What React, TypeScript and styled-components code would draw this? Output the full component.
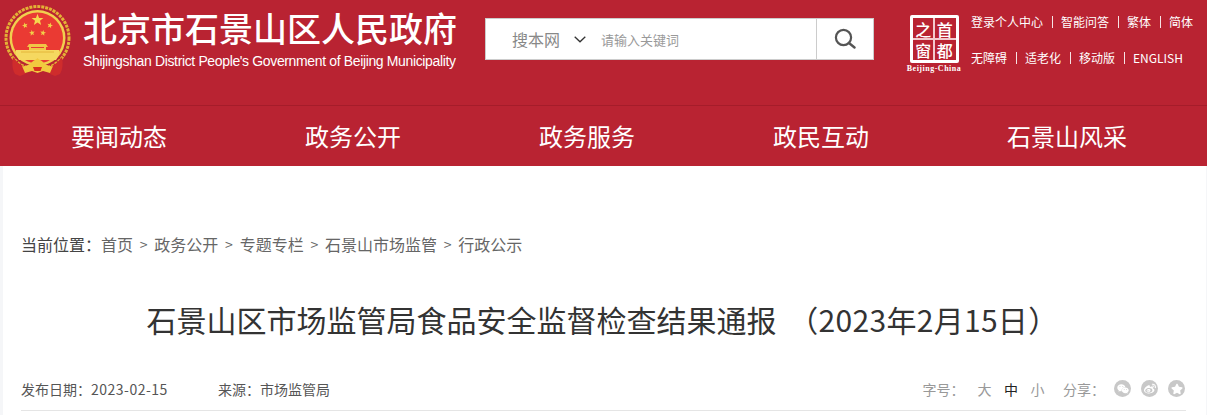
import { Fragment } from "react";
import styled, { createGlobalStyle } from "styled-components";
import { FaStar, FaWeibo, FaWeixin } from "react-icons/fa";

const navItems = ["要闻动态", "政务公开", "政务服务", "政民互动", "石景山风采"];
const crumbs = ["首页", "政务公开", "专题专栏", "石景山市场监管", "行政公示"];
const linkRows = [
  ["登录个人中心", "智能问答", "繁体", "简体"],
  ["无障碍", "适老化", "移动版", "ENGLISH"],
];

// five pointed star for the emblem
const starPoints = (cx: number, cy: number, r: number, tilt = 0) =>
  Array.from({ length: 10 }, (_, i) => {
    const radius = i % 2 === 0 ? r : r * 0.42;
    const angle = ((-90 + tilt + i * 36) * Math.PI) / 180;
    return `${(cx + radius * Math.cos(angle)).toFixed(2)},${(cy + radius * Math.sin(angle)).toFixed(2)}`;
  }).join(" ");

const Emblem = () => (
  <svg width="68" height="72" viewBox="0 0 68 72">
    <circle cx="33.5" cy="33" r="31.5" fill="none" stroke="#e4b236" strokeWidth="3" strokeDasharray="3 1" />
    <circle cx="33.5" cy="33" r="28" fill="#f1cf4e" />
    <circle cx="33.5" cy="33" r="25.5" fill="#ea3a33" />
    <polygon points={starPoints(33.5, 15, 6.2)} fill="#f5d84f" />
    <polygon points={starPoints(21, 20.5, 3, -15)} fill="#f2cf48" />
    <polygon points={starPoints(46, 20.5, 3, 15)} fill="#f2cf48" />
    <polygon points={starPoints(28, 28, 3, -10)} fill="#f2cf48" />
    <polygon points={starPoints(39, 28, 3, 10)} fill="#f2cf48" />
    <path d="M25 39h17l2 3h-2v3H25v-3h-2z" fill="#f0c646" />
    <path d="M27 42h13v1H27z" fill="#ea3a33" />
    <path d="M12 45h43v5l-3 5H15l-3-5z" fill="#f5d860" />
    <path d="M17 47h33" stroke="#e0ae30" strokeWidth="0.8" />
    <path d="M9 52c3 4 6 7 10 9l6 3-4 5-5 2-5-2c-3-5-3-11-2-17z" fill="#cf2c2c" />
    <path d="M58 52c-3 4-6 7-10 9l-6 3 4 5 5 2 5-2c3-5 3-11 2-17z" fill="#cf2c2c" />
    <path d="M18 61c4 1 8-2 10-4 2-2 4-2 5.500-4 1.500 2 3.500 2 5.500 4 2 2 6 5 10 4l-3 7-7-2-5.500 2-5.500-2-7 2z" fill="#f1c93f" />
    <path d="M29 62h9l-1.500 4h-6z" fill="#d8301f" />
  </svg>
);

const App = () => (
  <Page>
    <GlobalStyle />
    <Header>
      <TopBar>
        <EmblemSlot>
          <Emblem />
        </EmblemSlot>
        <Brand>
          <BrandName>北京市石景山区人民政府</BrandName>
          <BrandEn>Shijingshan District People's Government of Beijing Municipality</BrandEn>
        </Brand>
        <Search>
          <Scope>
            搜本网
            <svg width="12" height="7" viewBox="0 0 12 7">
              <path d="M.7.7 6 5.800 11.300.7" fill="none" stroke="#333" strokeWidth="1.3" />
            </svg>
          </Scope>
          <Placeholder>请输入关键词</Placeholder>
          <SearchButton>
            <svg width="22" height="22" viewBox="0 0 22 22">
              <circle cx="9.500" cy="9.500" r="7.600" fill="none" stroke="#555" strokeWidth="2.2" />
              <path d="M15 15l5.500 4.500" stroke="#555" strokeWidth="2.4" strokeLinecap="round" />
            </svg>
          </SearchButton>
        </Search>
        <Capital>
          <CapitalBox>
            <CapitalChar>之</CapitalChar>
            <CapitalChar>首</CapitalChar>
            <CapitalChar>窗</CapitalChar>
            <CapitalChar>都</CapitalChar>
          </CapitalBox>
          <CapitalCaption>Beijing-China</CapitalCaption>
        </Capital>
        <Links>
          {linkRows.map((row) => (
            <LinkRow key={row[0]}>
              {row.map((text, i) => (
                <Fragment key={text}>
                  {i > 0 && <Bar />}
                  <span>{text}</span>
                </Fragment>
              ))}
            </LinkRow>
          ))}
        </Links>
      </TopBar>
      <Nav>
        {navItems.map((item) => (
          <NavItem key={item}>{item}</NavItem>
        ))}
      </Nav>
    </Header>
    <Main>
      <Breadcrumb>
        <CrumbLabel>当前位置&#xFF1A;</CrumbLabel>
        {crumbs.map((crumb, i) => (
          <Fragment key={crumb}>
            {i > 0 && <CrumbArrow>&gt;</CrumbArrow>}
            <span>{crumb}</span>
          </Fragment>
        ))}
      </Breadcrumb>
      <Title>
        石景山区市场监管局食品安全监督检查结果通报 <TitleDate>&#xFF08;2023年2月15日&#xFF09;</TitleDate>
      </Title>
      <Meta>
        <MetaDate>
          发布日期&#xFF1A;<Digits>2023-02-15</Digits>
        </MetaDate>
        <span>来源&#xFF1A;市场监管局</span>
        <Tools>
          <FontLabel>字号&#xFF1A;</FontLabel>
          <FontSize>大</FontSize>
          <FontSize $active>中</FontSize>
          <FontSize>小</FontSize>
          <ShareLabel>分享&#xFF1A;</ShareLabel>
          <ShareIcons>
            <ShareIcon>
              <FaWeixin />
            </ShareIcon>
            <ShareIcon>
              <FaWeibo />
            </ShareIcon>
            <ShareIcon>
              <FaStar />
            </ShareIcon>
          </ShareIcons>
        </Tools>
      </Meta>
    </Main>
  </Page>
);

export default App;

const FONT = `"Noto Sans CJK SC", "Liberation Sans", sans-serif`;

const GlobalStyle = createGlobalStyle`
  html, body {
    margin: 0;
    padding: 0;
    background: #f5f6f8;
    font-family: ${FONT};
  }
`;

const Page = styled.div`
  width: 1207px;
  height: 415px;
  overflow: hidden;
`;

const Header = styled.header`
  background: #b92332;
  color: #fff;
`;

const TopBar = styled.div`
  height: 105px;
  display: flex;
  align-items: flex-start;
  border-bottom: 1px solid #a51c2a;
`;

const EmblemSlot = styled.div`
  width: 83px;
  padding: 5px 0 0 4px;
  box-sizing: border-box;
  flex-shrink: 0;
`;

const Brand = styled.div`
  width: 402px;
  padding-top: 7px;
  flex-shrink: 0;
`;

const BrandName = styled.div`
  font-size: 34px;
  line-height: 42px;
  font-weight: 500;
  white-space: nowrap;
`;

const BrandEn = styled.div`
  font-family: "Liberation Sans", sans-serif;
  font-size: 14px;
  line-height: 18px;
  margin-top: 3px;
  letter-spacing: -0.36px;
  white-space: nowrap;
`;

const Search = styled.div`
  width: 389px;
  height: 42px;
  margin-top: 18px;
  box-sizing: border-box;
  display: flex;
  align-items: center;
  background: #fff;
  border: 1px solid #ccc;
  flex-shrink: 0;
`;

const Scope = styled.div`
  width: 115px;
  padding-left: 26px;
  box-sizing: border-box;
  display: flex;
  align-items: center;
  gap: 14px;
  color: #888;
  font-size: 16px;
  flex-shrink: 0;
`;

const Placeholder = styled.div`
  flex: 1;
  color: #999;
  font-size: 13px;
`;

const SearchButton = styled.div`
  width: 56px;
  height: 100%;
  display: flex;
  align-items: center;
  justify-content: center;
  border-left: 1px solid #ccc;
`;

const Capital = styled.div`
  width: 54px;
  margin: 15px 0 0 33px;
  display: flex;
  flex-direction: column;
  align-items: center;
  flex-shrink: 0;
`;

const CapitalBox = styled.div`
  width: 49px;
  height: 48px;
  box-sizing: border-box;
  display: grid;
  grid-template-columns: minmax(0, 1fr) minmax(0, 1fr);
  grid-template-rows: minmax(0, 1fr) minmax(0, 1fr);
  gap: 2px;
  padding: 1px;
  border: 3px solid #fff;
  border-radius: 2px;
  background: linear-gradient(#f3c9cd, #f3c9cd) center / 2px 100% no-repeat,
    linear-gradient(#f3c9cd, #f3c9cd) center / 100% 2px no-repeat;
`;

const CapitalChar = styled.span`
  display: flex;
  align-items: center;
  justify-content: center;
  font-size: 16px;
  font-weight: 500;
  line-height: 16px;
`;

const CapitalCaption = styled.div`
  font-family: "Liberation Serif", serif;
  font-size: 8px;
  font-weight: 700;
  line-height: 10px;
  margin-top: 1px;
  letter-spacing: 0.5px;
  white-space: nowrap;
`;

const Links = styled.div`
  margin: 13px 0 0 10px;
  display: flex;
  flex-direction: column;
  gap: 18px;
`;

const LinkRow = styled.div`
  display: flex;
  align-items: center;
  gap: 8.500px;
  font-size: 12px;
  line-height: 18px;
  white-space: nowrap;
`;

const Bar = styled.i`
  width: 1px;
  height: 12px;
  background: #f6e3e5;
`;

const Nav = styled.nav`
  height: 60px;
  padding-left: 71px;
  display: flex;
  align-items: center;
  gap: 138px;
`;

const NavItem = styled.a`
  font-size: 24px;
  line-height: 60px;
  white-space: nowrap;
`;

const Main = styled.main`
  margin: 0 1px 0 3px;
  height: 249px;
  padding: 0 20px 0 18px;
  background: #fff;
  overflow: hidden;
`;

const Breadcrumb = styled.div`
  margin-top: 66px;
  display: flex;
  align-items: center;
  color: #666;
  font-size: 16px;
  line-height: 24px;
  white-space: nowrap;
`;

const CrumbLabel = styled.span`
  width: 80px;
  color: #444;
`;

const CrumbArrow = styled.span`
  width: 21.300px;
  text-align: center;
  font-size: 14px;
`;

const Title = styled.h1`
  margin: 41px 0 0;
  padding-right: 2px;
  color: #333;
  font-size: 30px;
  font-weight: 400;
  line-height: 44px;
  text-align: center;
  white-space: nowrap;
`;

const TitleDate = styled.span`
  margin-left: 5px;
  letter-spacing: 0.3px;
`;

const Meta = styled.div`
  margin-top: 31px;
  height: 39px;
  box-sizing: border-box;
  padding-bottom: 5px;
  display: flex;
  align-items: center;
  color: #555;
  font-size: 14px;
  border-bottom: 1px solid #e5e5e5;
  white-space: nowrap;
`;

const MetaDate = styled.span`
  width: 197px;
`;

const Digits = styled.span`
  letter-spacing: 0.5px;
`;

const Tools = styled.div`
  margin-left: auto;
  padding-right: 1px;
  display: flex;
  align-items: center;
  color: #999;
`;

const FontLabel = styled.span`
  margin-right: 13px;
`;

const FontSize = styled.span<{ $active?: boolean }>`
  width: 26.500px;
  color: ${(props) => (props.$active ? "#222" : "#999")};
`;

const ShareLabel = styled.span`
  margin: 0 9px 0 6px;
`;

const ShareIcons = styled.div`
  display: flex;
  gap: 10px;
`;

const ShareIcon = styled.span`
  width: 17px;
  height: 17px;
  border-radius: 50%;
  background: #c8c8c8;
  color: #fff;
  font-size: 12px;
  display: flex;
  align-items: center;
  justify-content: center;
`;
